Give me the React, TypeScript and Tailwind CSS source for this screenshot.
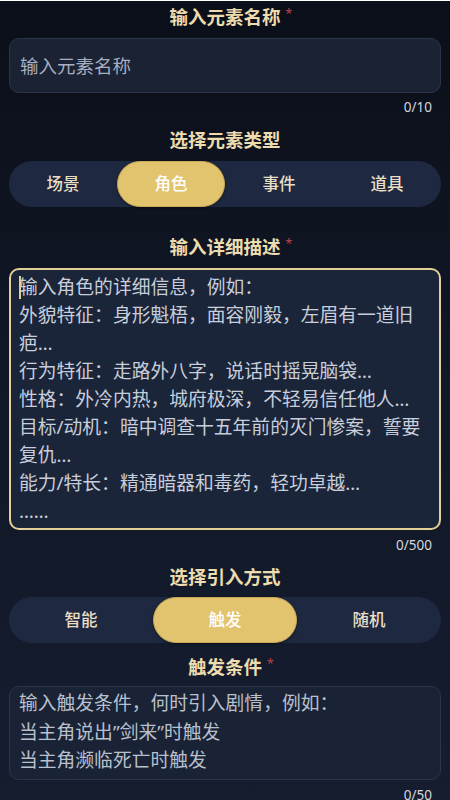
import React from "react";

const FONT = { fontFamily: '"Noto Sans","Noto Sans CJK SC",sans-serif' };

function Title({ text, star, cls }: { text: string; star?: boolean; cls: string }) {
  return (
    <div className={`flex h-[32px] items-center justify-center ${cls}`}>
      <span className="relative text-[18.5px] font-bold leading-none text-[#ecdcae]">
        {text}
        {star && (
          <span className="absolute -right-[12px] top-[-1px] text-[13px] font-normal text-[#b9434f]">*</span>
        )}
      </span>
    </div>
  );
}

function Counter({ text, cls }: { text: string; cls: string }) {
  return (
    <div className={`flex items-center justify-end pr-[9px] text-[13.5px] text-[#d3d7df] ${cls}`}>{text}</div>
  );
}

function Segmented({ items, active }: { items: string[]; active: number }) {
  const cols = items.length === 4 ? "grid-cols-4" : "grid-cols-3";
  return (
    <div className={`grid ${cols} h-[46px] rounded-full bg-[#1e2941]`}>
      {items.map((it, i) =>
        i === active ? (
          <div
            key={it}
            className="flex items-center justify-center rounded-full border border-[#c9a857] bg-[#e2c46f] text-[16.5px] font-medium text-white shadow-[0_1px_3px_rgba(0,0,0,0.5)]"
          >
            {it}
          </div>
        ) : (
          <div key={it} className="flex items-center justify-center text-[16.5px] font-medium text-[#eadfc4]">
            {it}
          </div>
        )
      )}
    </div>
  );
}

export default function App() {
  const desc = [
    "输入角色的详细信息，例如：",
    "外貌特征：身形魁梧，面容刚毅，左眉有一道旧",
    "疤…",
    "行为特征：走路外八字，说话时摇晃脑袋…",
    "性格：外冷内热，城府极深，不轻易信任他人…",
    "目标/动机：暗中调查十五年前的灭门惨案，誓要",
    "复仇…",
    "能力/特长：精通暗器和毒药，轻功卓越…",
    "……",
  ];
  const trig = ["输入触发条件，何时引入剧情，例如：", "当主角说出”剑来”时触发", "当主角濒临死亡时触发"];
  return (
    <div style={FONT} className="min-h-[800px] w-full bg-gradient-to-b from-[#0b0f19] via-[#111827] to-[#151d2f] px-[9px]">
      <Title text="输入元素名称" star cls="mt-[1px] mb-[5px]" />
      <div className="flex h-[55px] items-center rounded-[10px] border border-[#2b3549] bg-[#1a2234] px-[10px] text-[18.5px] text-[#a6aec0]">
        输入元素名称
      </div>
      <Counter text="0/10" cls="h-[29px]" />
      <Title text="选择元素类型" cls="mt-[2px] mb-[5px]" />
      <Segmented items={["场景", "角色", "事件", "道具"]} active={1} />
      <Title text="输入详细描述" star cls="mt-[24px] mb-[5px]" />
      <div className="relative h-[262px] rounded-[10px] border-2 border-[#e3cf98] bg-[#1b2539] pl-[8px] pt-[3px] text-[18.8px] leading-[28px] text-[#c8cedb]">
        <span className="absolute left-[8px] top-[6px] h-[23px] w-[2px] bg-[#e3cf98]" />
        {desc.map((l, i) => (
          <div key={i} className="whitespace-nowrap">
            {l}
          </div>
        ))}
      </div>
      <Counter text="0/500" cls="h-[31px]" />
      <Title text="选择引入方式" cls="mb-[4px]" />
      <Segmented items={["智能", "触发", "随机"]} active={1} />
      <Title text="触发条件" star cls="mt-[8px] mb-[3px]" />
      <div className="h-[94px] rounded-[10px] border border-[#2b3549] bg-[#1a2336] pl-[9px] pt-[2px] text-[18.8px] leading-[28.5px] text-[#b9c0cd]">
        {trig.map((l, i) => (
          <div key={i} className="whitespace-nowrap">
            {l}
          </div>
        ))}
      </div>
      <Counter text="0/50" cls="h-[30px]" />
    </div>
  );
}
